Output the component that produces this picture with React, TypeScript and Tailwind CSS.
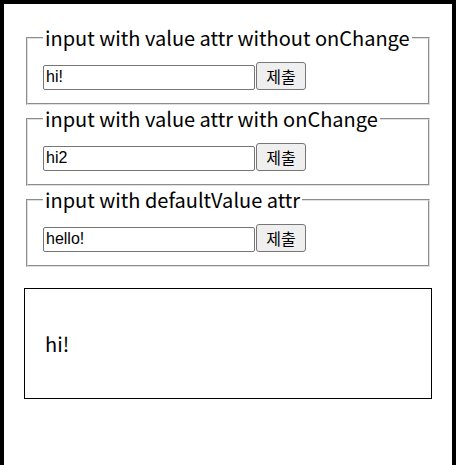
import React, { useState } from 'react';

const pageFont = { fontFamily: '"Noto Sans CJK KR", "Noto Sans", sans-serif' };

function Row({ value, onChange, readOnly }: { value?: string; onChange?: (v: string) => void; readOnly?: boolean }) {
  return (
    <div className="flex items-end h-[32px]">
      <input
        type="text"
        value={value}
        readOnly={readOnly}
        onChange={(e) => onChange && onChange(e.target.value)}
        className="w-[212px] h-[25px] border border-[#767676] rounded-[2px] px-[2px] text-[16px] text-black bg-white outline-none font-['Liberation_Sans',Arial,sans-serif]"
      />
      <button className="w-[50px] h-[28px] ml-px border border-[#767676] rounded-[3px] bg-[#efefef] text-[16px] text-black font-['Noto_Sans_CJK_KR',sans-serif] leading-none">
        제출
      </button>
    </div>
  );
}

export default function App() {
  const [text2, setText2] = useState('hi2');
  const [text3, setText3] = useState('hello!');

  return (
    <div className="w-[456px] min-h-[600px] border-4 border-black p-5 bg-white" style={pageFont}>
      <fieldset className="mx-[2px] border-2 [border-style:groove] border-[#e0e0e0] px-[15px] pt-[6.5px] pb-[13.5px] text-[20px]">
        <legend className="px-[2px] text-black leading-[27px] whitespace-nowrap">input with value attr without onChange</legend>
        <Row value="hi!" readOnly />
      </fieldset>
      <fieldset className="mx-[2px] border-2 [border-style:groove] border-[#e0e0e0] px-[15px] pt-[6.5px] pb-[13.5px] text-[20px]">
        <legend className="px-[2px] text-black leading-[27px] whitespace-nowrap">input with value attr with onChange</legend>
        <Row value={text2} onChange={setText2} />
      </fieldset>
      <fieldset className="mx-[2px] border-2 [border-style:groove] border-[#e0e0e0] px-[15px] pt-[6.5px] pb-[13.5px] text-[20px]">
        <legend className="px-[2px] text-black leading-[27px] whitespace-nowrap">input with defaultValue attr</legend>
        <Row value={text3} onChange={setText3} />
      </fieldset>

      <div className="mt-[21px] h-[111px] border border-black flex items-center px-5 text-[20px] text-black">
        hi!
      </div>
    </div>
  );
}
